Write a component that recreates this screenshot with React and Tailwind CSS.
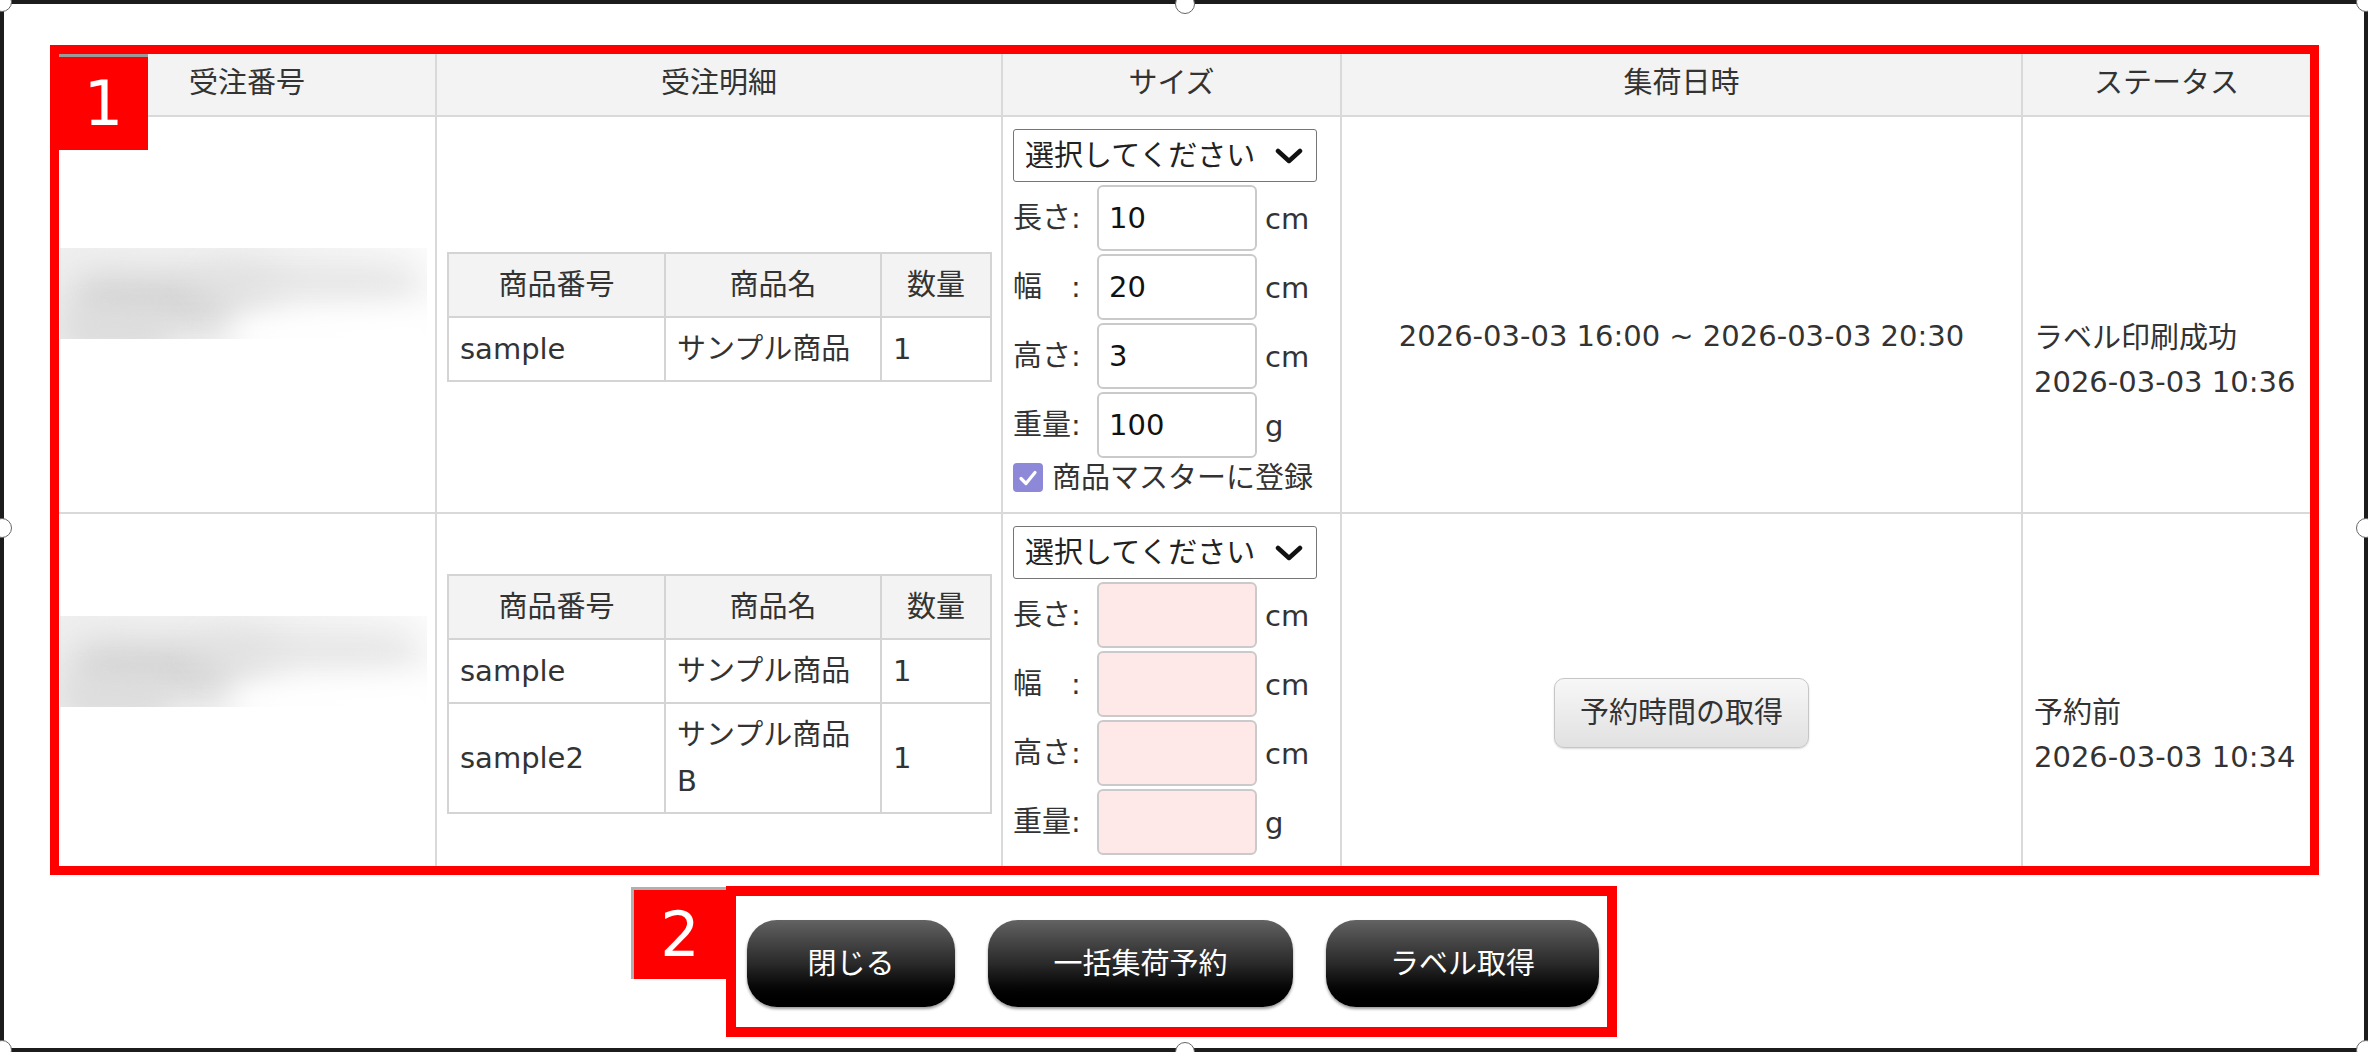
import React from 'react';

const line = 'border-[#d9d9d9]';
const innerLine = 'border-[#d4d4d4]';

const handles = [
  'left-[-8px] top-[-8px]',
  'left-[1175px] top-[-6px]',
  'left-[2356px] top-[-8px]',
  'left-[-8px] top-[518px]',
  'left-[2356px] top-[518px]',
  'left-[-8px] top-[1040px]',
  'left-[1175px] top-[1042px]',
  'left-[2356px] top-[1040px]',
];

function Smudge() {
  return (
    <div className="relative w-[367px] h-[91px] overflow-hidden bg-linear-to-r from-[#efefef] via-[#f3f3f3] to-[#fcfcfc]">
      <div className="absolute left-[10px] top-[26px] w-[210px] h-[52px] rounded-full bg-[#d4d4d4] blur-[18px]" />
      <div className="absolute left-[140px] top-[16px] w-[220px] h-[40px] rounded-full bg-[#e4e4e4] blur-[18px]" />
      <div className="absolute left-[0px] top-[62px] w-[110px] h-[40px] rounded-full bg-[#dcdcdc] blur-[14px]" />
      <div className="absolute right-[-20px] bottom-[-20px] w-[220px] h-[50px] rounded-full bg-white blur-[16px]" />
    </div>
  );
}

function ItemTable({ rows }) {
  return (
    <div className={`grid w-[545px] grid-cols-[217px_216px_108px] border-2 ${innerLine}`}>
      {['商品番号', '商品名', '数量'].map((h, i) => (
        <div
          key={h}
          className={`flex items-center justify-center bg-[#f2f3f2] py-[8px] leading-[46px] border-b-2 ${innerLine} ${i < 2 ? 'border-r-2' : ''}`}
        >
          {h}
        </div>
      ))}
      {rows.map((r, ri) =>
        r.map((c, i) => (
          <div
            key={`${ri}-${i}`}
            className={`flex items-center px-[11px] py-[8px] leading-[46px] ${innerLine} ${i < 2 ? 'border-r-2' : ''} ${ri < rows.length - 1 ? 'border-b-2' : ''}`}
          >
            {c}
          </div>
        ))
      )}
    </div>
  );
}

function SizeForm({ values, pink, master }) {
  const labels = ['長さ:', '幅　:', '高さ:', '重量:'];
  const units = ['cm', 'cm', 'cm', 'g'];
  return (
    <div className="flex flex-col items-start gap-[3px]">
      <div className="flex h-[53px] w-[304px] items-center justify-between rounded-[3px] border border-[#767676] bg-white pl-[11px] pr-[13px] text-[#222]">
        <span>選択してください</span>
        <svg width="28" height="16" viewBox="0 0 28 16">
          <path d="M3 3 L14 13 L25 3" stroke="#111" strokeWidth="4.5" fill="none" strokeLinecap="round" strokeLinejoin="round" />
        </svg>
      </div>
      {labels.map((l, i) => (
        <div key={l} className="flex items-center">
          <span className="w-[84px] whitespace-pre">{l}</span>
          <div
            className={`flex h-[66px] w-[160px] items-center rounded-[6px] border-2 border-[#cacaca] pl-[10px] text-[#111] ${pink ? 'bg-[#ffe8e8]' : 'bg-white'}`}
          >
            {values ? values[i] : ''}
          </div>
          <span className="ml-[8px] pt-[2px]">{units[i]}</span>
        </div>
      ))}
      {master && (
        <div className="flex h-[33px] items-center gap-[9px]">
          <div className="flex h-[29px] w-[30px] items-center justify-center rounded-[4px] bg-[#8e88d8]">
            <svg width="20" height="18" viewBox="0 0 20 18">
              <path d="M3 9.5 L8 14.5 L17 3.5" stroke="#fff" strokeWidth="3.2" fill="none" strokeLinecap="round" strokeLinejoin="round" />
            </svg>
          </div>
          <span>商品マスターに登録</span>
        </div>
      )}
    </div>
  );
}

function Label({ children, className = '' }) {
  return (
    <div className={`flex items-center justify-center bg-[#ff0000] text-[62px] leading-none text-white ${className}`}>
      {children}
    </div>
  );
}

function DarkButton({ children, w }) {
  return (
    <button
      className={`flex h-[87px] ${w} items-center justify-center rounded-[30px] bg-linear-to-b from-[#636363] via-[#2a2a2a] to-[#000000] text-white shadow-[0_2px_3px_rgba(0,0,0,0.4)]`}
    >
      {children}
    </button>
  );
}

export default function App() {
  return (
    <div className="relative h-[1052px] w-[2368px] overflow-hidden bg-white pl-[50px] pt-[45px] font-['DejaVu_Sans','Noto_Sans_CJK_JP',sans-serif] text-[29px] leading-[44px] text-[#333] shadow-[inset_0_0_0_4px_#1c1c1c]">
      {handles.map((h) => (
        <div key={h} className={`absolute ${h} h-[20px] w-[20px] rounded-full border-[1.5px] border-[#666] bg-white`} />
      ))}

      <div className="relative w-[2269px] border-[9px] border-[#ff0000]">
        <div className="grid grid-cols-[378px_566px_339px_681px_287px] grid-rows-[63px_397px_352px]">
          {['受注番号', '受注明細', 'サイズ', '集荷日時', 'ステータス'].map((h, i) => (
            <div
              key={h}
              className={`flex items-center justify-center bg-[#f2f3f2] pb-[3px] border-b-2 ${line} ${i < 4 ? 'border-r-2' : ''}`}
            >
              {h}
            </div>
          ))}

          <div className={`border-r-2 border-b-2 ${line} pt-[131px] pl-[1px]`}>
            <Smudge />
          </div>
          <div className={`border-r-2 border-b-2 ${line} pt-[135px] pl-[10px]`}>
            <ItemTable rows={[['sample', 'サンプル商品', '1']]} />
          </div>
          <div className={`border-r-2 border-b-2 ${line} pt-[12px] pl-[10px]`}>
            <SizeForm values={['10', '20', '3', '100']} master />
          </div>
          <div className={`border-r-2 border-b-2 ${line} pt-[197px] text-center`}>
            2026-03-03 16:00 ~ 2026-03-03 20:30
          </div>
          <div className={`border-b-2 ${line} pt-[199px] pl-[11px]`}>
            <div>ラベル印刷成功</div>
            <div>2026-03-03 10:36</div>
          </div>

          <div className={`border-r-2 ${line} pt-[102px] pl-[1px]`}>
            <Smudge />
          </div>
          <div className={`border-r-2 ${line} pt-[60px] pl-[10px]`}>
            <ItemTable
              rows={[
                ['sample', 'サンプル商品', '1'],
                ['sample2', 'サンプル商品 B', '1'],
              ]}
            />
          </div>
          <div className={`border-r-2 ${line} pt-[12px] pl-[10px]`}>
            <SizeForm pink />
          </div>
          <div className={`flex justify-center border-r-2 ${line} pt-[164px]`}>
            <button className="flex h-[70px] w-[255px] items-center justify-center rounded-[10px] border border-[#c6c6c6] bg-linear-to-b from-[#f7f7f7] to-[#e1e1e1] text-[#333] shadow-[0_1px_2px_rgba(0,0,0,0.15)]">
              予約時間の取得
            </button>
          </div>
          <div className="pt-[177px] pl-[11px]">
            <div>予約前</div>
            <div>2026-03-03 10:34</div>
          </div>
        </div>

        <Label className="absolute left-0 top-0 h-[96px] w-[89px] border-t-[3px] border-[#9a9a9a]">1</Label>
      </div>

      <div className="ml-[581px] mt-[11px] flex items-start">
        <Label className="mt-[1px] h-[92px] w-[95px] border-l-[3px] border-t-[3px] border-[#b0b0b0]">2</Label>
        <div className="flex h-[151px] w-[891px] gap-[33px] border-[10px] border-[#ff0000] pl-[11px] pt-[24px]">
          <DarkButton w="w-[208px]">閉じる</DarkButton>
          <DarkButton w="w-[305px]">一括集荷予約</DarkButton>
          <DarkButton w="w-[273px]">ラベル取得</DarkButton>
        </div>
      </div>
    </div>
  );
}
